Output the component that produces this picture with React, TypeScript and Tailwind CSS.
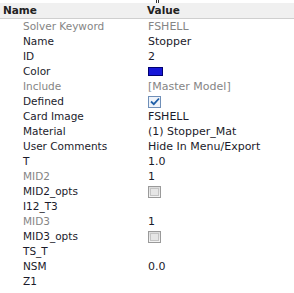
import React from "react";

type Row = {
  label: string;
  value?: string;
  dim?: boolean;
  valueDim?: boolean;
  kind?: "text" | "color" | "check" | "box";
};

const rows: Row[] = [
  { label: "Solver Keyword", value: "FSHELL", dim: true, valueDim: true },
  { label: "Name", value: "Stopper" },
  { label: "ID", value: "2" },
  { label: "Color", kind: "color" },
  { label: "Include", value: "[Master Model]", dim: true, valueDim: true },
  { label: "Defined", kind: "check" },
  { label: "Card Image", value: "FSHELL" },
  { label: "Material", value: "(1) Stopper_Mat" },
  { label: "User Comments", value: "Hide In Menu/Export" },
  { label: "T", value: "1.0" },
  { label: "MID2", value: "1", dim: true },
  { label: "MID2_opts", kind: "box" },
  { label: "I12_T3" },
  { label: "MID3", value: "1", dim: true },
  { label: "MID3_opts", kind: "box" },
  { label: "TS_T" },
  { label: "NSM", value: "0.0" },
  { label: "Z1" },
];

function CheckBox({ checked }: { checked?: boolean }) {
  return (
    <span
      className={`grid h-[12px] w-[13px] place-items-center border ${
        checked ? "border-[#6f8fb8] bg-[#eef3fa]" : "border-[#9a9a9a] bg-gradient-to-b from-[#dcdcdc] to-[#f4f4f4]"
      }`}
    >
      {checked ? (
        <svg width="10" height="9" viewBox="0 0 10 9">
          <path d="M1 4.5 L3.8 7.2 L9 1.5" fill="none" stroke="#1f5fa8" strokeWidth="1.8" />
        </svg>
      ) : (
        <span className="h-[8px] w-[9px] border border-[#c4c4c4] bg-[#e6e6e6]" />
      )}
    </span>
  );
}

function Value({ row }: { row: Row }) {
  if (row.kind === "color")
    return <span className="h-[9px] w-[15px] border border-[#000070] bg-[#1717d8]" />;
  if (row.kind === "check") return <CheckBox checked />;
  if (row.kind === "box") return <CheckBox />;
  return (
    <span className={`text-[11px] ${row.valueDim ? "text-[#858585]" : "text-[#1b1b2b]"}`}>
      {row.value}
    </span>
  );
}

export default function App() {
  return (
    <div className="h-[293px] w-[294px] overflow-hidden bg-white font-['DejaVu_Sans',sans-serif] text-[10.5px] leading-none">
      <div className="relative h-[3px]">
        <span className="absolute left-[156px] top-0 h-[3px] w-[1px] bg-[#333]" />
        <span className="absolute left-[158px] top-0 h-[3px] w-[1px] bg-[#333]" />
      </div>
      <div className="flex h-[16px] items-center border-b border-[#cfcfcf] bg-[#f0f0f0] font-bold text-[#222]">
        <span className="w-[147px] pl-[3px]">Name</span>
        <span>Value</span>
      </div>
      <div>
        {rows.map((row) => (
          <div key={row.label} className="flex h-[15px] items-center">
            <span
              className={`w-[148px] pl-[23px] ${row.dim ? "text-[#858585]" : "text-[#1b1b2b]"}`}
            >
              {row.label}
            </span>
            <Value row={row} />
          </div>
        ))}
      </div>
    </div>
  );
}
